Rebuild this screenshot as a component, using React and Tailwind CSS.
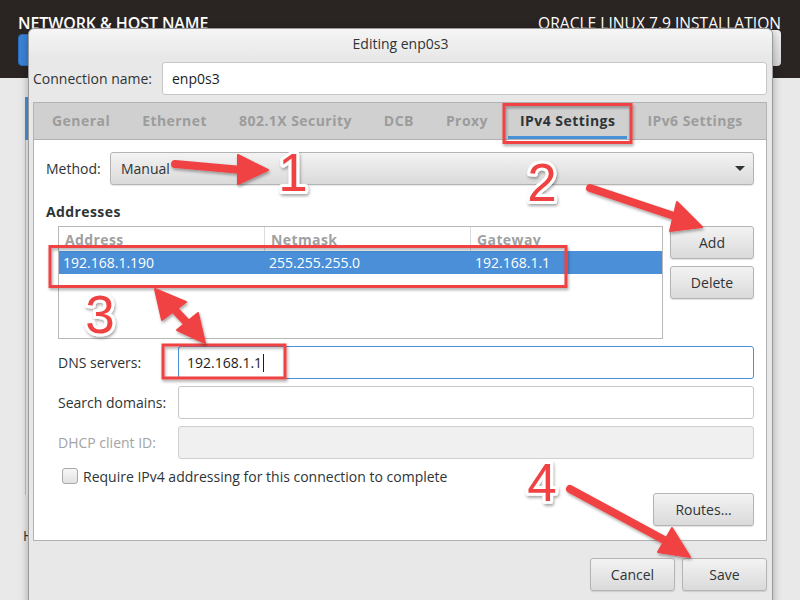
const RED = "#f04343";

function Btn({ children, className = "" }) {
  return (
    <div
      className={`flex items-center justify-center h-[33px] rounded-[3px] border border-[#b4b4b4] bg-linear-to-b from-[#f3f3f3] to-[#dadada] text-[14px] text-[#2e3436] shadow-[0_1px_1px_rgba(0,0,0,0.12)] ${className}`}
    >
      {children}
    </div>
  );
}

function Field({ label, muted, focused, disabled, children }) {
  return (
    <div className="flex items-center pl-[12px]">
      <span className={`w-[120px] text-[14px] ${muted ? "text-[#a3a3a3]" : "text-[#2e3436]"}`}>{label}</span>
      <div
        className={`flex-1 h-[33px] rounded-[3px] border flex items-center pl-[8px] text-[14px] text-[#1c1c1c] ${
          focused ? "border-[#4a90d9] bg-white" : disabled ? "border-[#cfcfcf] bg-[#f0f0f0]" : "border-[#c6c6c6] bg-white"
        }`}
      >
        {children}
      </div>
    </div>
  );
}

const tabs = ["General", "Ethernet", "802.1X Security", "DCB", "Proxy", "IPv4 Settings", "IPv6 Settings"];

function Annotations() {
  const num = (x, y, t) => (
    <text
      x={x}
      y={y}
      textAnchor="middle"
      fontFamily="Liberation Sans, Arial, sans-serif"
      fontSize="53"
      fill={RED}
      stroke="#ffffff"
      strokeWidth="6"
      strokeLinejoin="round"
      paintOrder="stroke"
      filter="url(#sh)"
    >
      {t}
    </text>
  );
  return (
    <svg className="absolute left-0 top-0 pointer-events-none" width="800" height="600" viewBox="0 0 800 600">
      <defs>
        <filter id="sh" x="-20%" y="-20%" width="140%" height="140%">
          <feDropShadow dx="1" dy="2" stdDeviation="1.5" floodColor="#000" floodOpacity="0.35" />
        </filter>
      </defs>
      <g fill="none" stroke={RED} strokeWidth="3" filter="url(#sh)">
        <rect x="504" y="104.5" width="127" height="38" />
        <rect x="50" y="246.5" width="516" height="40" />
        <rect x="163" y="345" width="122" height="33" />
      </g>
      <g fill={RED} stroke={RED} strokeLinecap="round" strokeLinejoin="round" filter="url(#sh)">
        <line x1="175" y1="164" x2="242" y2="170" strokeWidth="8" />
        <polygon points="238,155 268,170 238,184" strokeWidth="2" />
        <line x1="590" y1="188" x2="680" y2="218" strokeWidth="8" />
        <polygon points="677,202 702,227 670,231" strokeWidth="2" />
        <line x1="570" y1="489" x2="668" y2="542" strokeWidth="8" />
        <polygon points="672,528 690,557 658,552" strokeWidth="2" />
        <line x1="172" y1="307" x2="190" y2="326" strokeWidth="8" />
        <polygon points="155,289 186,302 162,320" strokeWidth="2" />
        <polygon points="205,343 177,330 198,313" strokeWidth="2" />
      </g>
      {num(293, 191, "1")}
      {num(542, 201, "2")}
      {num(100, 333, "3")}
      {num(542, 501, "4")}
    </svg>
  );
}

export default function App() {
  return (
    <div className="relative w-[800px] h-[600px] overflow-hidden bg-[#e9e9e9] font-['Open_Sans',sans-serif]">
      {/* installer screen behind the dialog */}
      <div className="h-[78px] bg-[#2a2523]">
        <div className="flex justify-between pl-[18px] pr-[19px] pt-[12px] leading-[22px] text-white">
          <span className="text-[16px] font-semibold tracking-[-0.1px]">NETWORK &amp; HOST NAME</span>
          <span className="text-[15.6px]">ORACLE LINUX 7.9 INSTALLATION</span>
        </div>
        <div className="flex justify-between pl-[18px] pr-[19px] -mt-[4px]">
          <div className="mt-[4px] w-[70px] h-[32px] rounded-[4px] bg-[#3a83d8] border border-[#2a6bbd]" />
          <div className="w-[80px] h-[36px] rounded-[4px] bg-linear-to-b from-[#f0f0f0] to-[#d6d6d6]" />
        </div>
      </div>
      <div className="ml-[25px] mt-[19px] h-[398px] w-[300px] bg-[#f2f2f2] border-l border-[#bdbdbd]">
        <div className="w-[3px] h-[43px] bg-[#4a90d9] -ml-[1px]" />
      </div>
      <div className="ml-[23px] mt-[30px] text-[14px] text-[#2e3436]">Host name:</div>

      {/* dialog window */}
      <div className="absolute left-[28px] top-[28px] w-[745px] h-[580px] bg-[#e8e8e8] border border-[#9a9a9a] rounded-t-[6px] shadow-[0_2px_8px_rgba(0,0,0,0.3)]">
        <div className="h-[29px] flex items-center justify-center rounded-t-[6px] bg-linear-to-b from-[#f5f5f5] to-[#e8e8e8] text-[14px] text-[#2e3436]">
          Editing enp0s3
        </div>
        <div className="pl-[4px] pr-[5px]">
          <div className="mt-[4px] flex items-center">
            <span className="w-[129px] text-[14px] text-[#2e3436]">Connection name:</span>
            <div className="flex-1 h-[33px] bg-white border border-[#c6c6c6] rounded-[3px] flex items-center pl-[9px] text-[14px] text-[#1c1c1c]">
              enp0s3
            </div>
          </div>

          <div className="mt-[7px] border border-[#b2b2b2]">
            <div className="h-[37px] flex bg-[#d0d0d0] border-b border-[#b2b2b2] pl-[2px]">
              {tabs.map((t) => (
                <div
                  key={t}
                  className={`mx-[4px] px-[12px] pt-[1px] flex items-center whitespace-nowrap text-[14px] tracking-[0.45px] font-bold border-b-[3px] ${
                    t === "IPv4 Settings" ? "text-[#2e3436] border-[#4a90d9]" : "text-[#9c9c9c] border-transparent"
                  }`}
                >
                  {t}
                </div>
              ))}
            </div>

            <div className="h-[400px] bg-white px-[12px] pt-[12px]">
              <div className="flex items-center">
                <span className="w-[64px] text-[14px] text-[#2e3436]">Method:</span>
                <div className="flex-1 h-[33px] rounded-[3px] border border-[#b4b4b4] bg-linear-to-b from-[#f3f3f3] to-[#dadada] flex items-center justify-between pl-[10px] pr-[8px] text-[14px] text-[#2e3436] shadow-[0_1px_1px_rgba(0,0,0,0.1)]">
                  <span>Manual</span>
                  <svg width="10" height="6" viewBox="0 0 10 6">
                    <polygon points="0,0 10,0 5,5" fill="#2e3436" />
                  </svg>
                </div>
              </div>

              <div className="mt-[19px] leading-[16px] text-[14px] tracking-[0.4px] font-bold text-[#2e3436]">Addresses</div>

              <div className="mt-[6px] flex pl-[12px] gap-[7px]">
                <div className="w-[605px] h-[113px] border border-[#b8b8b8] bg-white">
                  <div className="grid grid-cols-[206px_206px_1fr] h-[24px] text-[14px] tracking-[0.4px] font-bold text-[#a0a0a0]">
                    <div className="pl-[6px] flex items-center border-r border-[#dcdcdc]">Address</div>
                    <div className="pl-[6px] flex items-center border-r border-[#dcdcdc]">Netmask</div>
                    <div className="pl-[6px] flex items-center">Gateway</div>
                  </div>
                  <div className="grid grid-cols-[206px_206px_1fr] h-[23px] bg-[#4a8fd8] text-[14px] text-white">
                    <div className="pl-[4px] flex items-center">192.168.1.190</div>
                    <div className="pl-[4px] flex items-center">255.255.255.0</div>
                    <div className="pl-[4px] flex items-center">192.168.1.1</div>
                  </div>
                </div>
                <div className="flex flex-col gap-[7px]">
                  <Btn className="w-[84px]">Add</Btn>
                  <Btn className="w-[84px]">Delete</Btn>
                </div>
              </div>

              <div className="mt-[7px] flex flex-col gap-[7px]">
                <Field label="DNS servers:" focused>
                  <span>192.168.1.1</span>
                  <span className="ml-[1px] w-[1px] h-[18px] bg-[#1c1c1c]" />
                </Field>
                <Field label="Search domains:" />
                <Field label="DHCP client ID:" muted disabled />
              </div>

              <div className="mt-[9px] h-[16px] pl-[16px] flex items-center gap-[5px]">
                <div className="w-[16px] h-[16px] rounded-[3px] border border-[#a9a9a9] bg-linear-to-b from-[#f7f7f7] to-[#e2e2e2]" />
                <span className="text-[14px] text-[#2e3436]">Require IPv4 addressing for this connection to complete</span>
              </div>

              <div className="mt-[9px] flex justify-end">
                <Btn className="w-[101px]">Routes…</Btn>
              </div>
            </div>
          </div>

          <div className="mt-[17px] flex justify-end gap-[7px]">
            <Btn className="w-[85px]">Cancel</Btn>
            <Btn className="w-[85px]">Save</Btn>
          </div>
        </div>
      </div>

      <Annotations />
    </div>
  );
}
